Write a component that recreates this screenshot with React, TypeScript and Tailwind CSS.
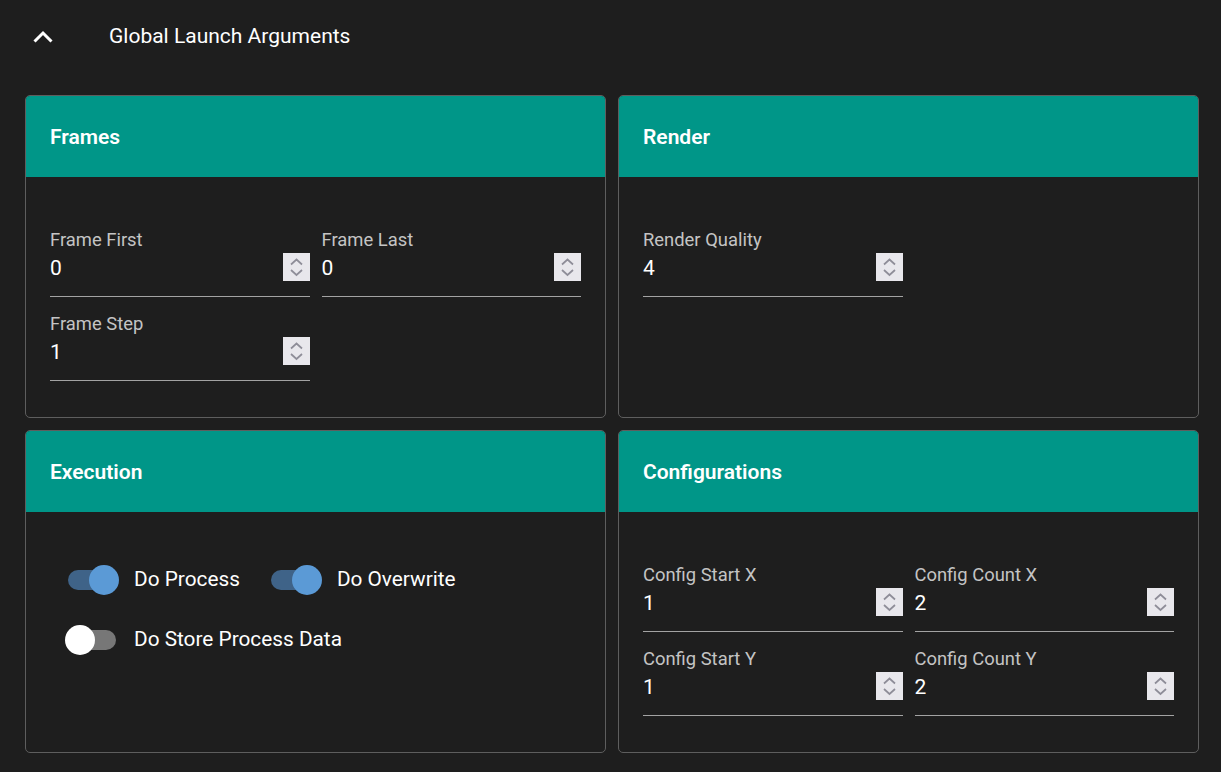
import React from "react";

function SpinBox() {
  return (
    <div className="absolute right-0 top-[-1px] w-[27px] h-[28px] bg-[#e8e7ec]">
      <svg width="27" height="28" viewBox="0 0 27 28">
        <path d="M8 11.5 L13.5 6.5 L19 11.5" fill="none" stroke="#8e8d98" strokeWidth="1.7" />
        <path d="M8 17 L13.5 22 L19 17" fill="none" stroke="#8e8d98" strokeWidth="1.7" />
      </svg>
    </div>
  );
}

function Field({ label, value }: { label: string; value: string }) {
  return (
    <div className="border-b border-[#a3a3a3] pb-[14px]">
      <div className="h-[24px] text-[18.4px] leading-[24px] text-[#c4c4c4]">{label}</div>
      <div className="relative mt-[2px] h-[28px] text-[21px] leading-[28px] text-white">
        {value}
        <SpinBox />
      </div>
    </div>
  );
}

function Card({ title, children }: { title: string; children: React.ReactNode }) {
  return (
    <div className="h-[323px] rounded-[5px] border border-[#5e5e5e] overflow-hidden flex flex-col">
      <div className="h-[81px] bg-[#009688] flex items-center px-6 pt-[3px] text-[21px] font-semibold text-white">
        {title}
      </div>
      <div className="flex-1">{children}</div>
    </div>
  );
}

function Switch({ on, label }: { on: boolean; label: string }) {
  return (
    <div className="flex items-center gap-[15px]">
      <div className="relative w-[54px] h-[30px]">
        <div
          className={
            "absolute left-[3px] top-[5px] w-[48px] h-[20px] rounded-full " +
            (on ? "bg-[#3f6388]" : "bg-[#777777]")
          }
        />
        <div
          className={
            "absolute top-0 w-[30px] h-[30px] rounded-full " +
            (on ? "left-[24px] bg-[#5b9ad6]" : "left-0 bg-white")
          }
        />
      </div>
      <span className="text-[20.8px] text-white">{label}</span>
    </div>
  );
}

export default function App() {
  return (
    <div
      className="min-h-[772px] bg-[#1e1e1e] pl-[25px] pr-[22px]"
      style={{ fontFamily: "Roboto, 'Noto Sans', sans-serif" }}
    >
      <div className="h-[72px] flex items-center pt-[2px]">
        <svg width="20" height="14" viewBox="0 0 20 14" className="ml-[8px]">
          <path d="M1.5 11.5 L10 3 L18.5 11.5" fill="none" stroke="white" strokeWidth="3" />
        </svg>
        <span className="ml-[56px] text-[21px] text-white">Global Launch Arguments</span>
      </div>
      <div className="mt-[23px] grid grid-cols-2 gap-[12px]">
        <Card title="Frames">
          <div className="px-6 pt-[51px] grid grid-cols-2 gap-x-3 gap-y-[15px]">
            <Field label="Frame First" value="0" />
            <Field label="Frame Last" value="0" />
            <Field label="Frame Step" value="1" />
          </div>
        </Card>
        <Card title="Render">
          <div className="px-6 pt-[51px] grid grid-cols-2 gap-x-3 gap-y-[15px]">
            <Field label="Render Quality" value="4" />
          </div>
        </Card>
        <Card title="Execution">
          <div className="pl-[39px] pt-[52px] flex flex-col gap-[29px]">
            <div className="flex items-center gap-[28px]">
              <Switch on label="Do Process" />
              <Switch on label="Do Overwrite" />
            </div>
            <div className="flex items-center">
              <Switch on={false} label="Do Store Process Data" />
            </div>
          </div>
        </Card>
        <Card title="Configurations">
          <div className="px-6 pt-[51px] grid grid-cols-2 gap-x-3 gap-y-[15px]">
            <Field label="Config Start X" value="1" />
            <Field label="Config Count X" value="2" />
            <Field label="Config Start Y" value="1" />
            <Field label="Config Count Y" value="2" />
          </div>
        </Card>
      </div>
    </div>
  );
}
